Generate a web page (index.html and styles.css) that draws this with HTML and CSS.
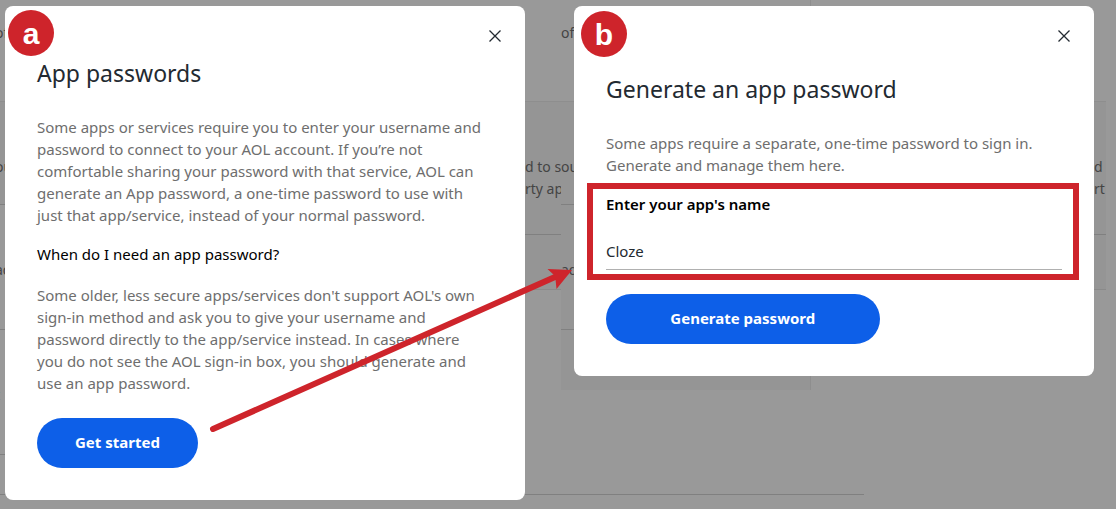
FILE: index.html
```
<!DOCTYPE html>
<html lang="en">

<head>
  <meta charset="UTF-8">
  <meta name="viewport" content="width=device-width, initial-scale=1.0">
  <title>App passwords</title>
  <link rel="stylesheet" href="styles.css">
</head>

<body>
  <main class="stage">
    <!-- dimmed account pages behind the dialogs -->
    <div class="backdrop" aria-hidden="true">
      <div class="pages">
        <div class="page">
          <div class="edge edge-left">
            <div class="row row-head"><span>of</span></div>
            <div class="row row-tall"><span>ou</span></div>
            <div class="row row-add"><span>ad</span></div>
            <div class="row row-last"><span>t</span></div>
          </div>
          <div class="edge edge-right">
            <div class="row row-head"></div>
            <div class="row row-info"><span>d to s</span><span>rty ap</span></div>
            <div class="row row-short"></div>
          </div>
        </div>
        <div class="page page-cut">
          <div class="edge edge-left shaded">
            <div class="row row-head"><span>of</span></div>
            <div class="row row-tall"><span>ou</span></div>
            <div class="row row-add"><span>ad</span></div>
          </div>
          <div class="edge edge-right">
            <div class="row row-head"></div>
            <div class="row row-info"><span>d</span><span>rt</span></div>
            <div class="row row-short"></div>
          </div>
        </div>
      </div>
      <div class="page-end"></div>
    </div>

    <div class="dialogs">
      <section class="dialog" aria-labelledby="title-a">
        <span class="badge">a</span>
        <button class="close" type="button" aria-label="Close">
          <svg viewBox="0 0 12 12" width="12" height="12"><path d="M.5.5l11 11M11.5.5l-11 11" /></svg>
        </button>
        <h1 class="title" id="title-a">App passwords</h1>
        <p class="text">Some apps or services require you to enter your username and<br>
          password to connect to your AOL account. If you’re not<br>
          comfortable sharing your password with that service, AOL can<br>
          generate an App password, a one-time password to use with<br>
          just that app/service, instead of your normal password.</p>
        <h2 class="question">When do I need an app password?</h2>
        <p class="text">Some older, less secure apps/services don't support AOL's own<br>
          sign-in method and ask you to give your username and<br>
          password directly to the app/service instead. In cases where<br>
          you do not see the AOL sign-in box, you should generate and<br>
          use an app password.</p>
        <button class="btn" type="button">Get started</button>
      </section>

      <section class="dialog dialog-b" aria-labelledby="title-b">
        <span class="badge">b</span>
        <button class="close" type="button" aria-label="Close">
          <svg viewBox="0 0 12 12" width="12" height="12"><path d="M.5.5l11 11M11.5.5l-11 11" /></svg>
        </button>
        <h1 class="title" id="title-b">Generate an app password</h1>
        <p class="text">Some apps require a separate, one-time password to sign in.<br>
          Generate and manage them here.</p>
        <form>
          <div class="highlight">
            <label for="app-name">Enter your app's name</label>
            <input id="app-name" type="text" value="Cloze">
          </div>
          <button class="btn btn-wide" type="button">Generate password</button>
        </form>
      </section>
    </div>

    <!-- arrow from step a to step b -->
    <svg class="arrow" viewBox="0 0 366 174" width="366" height="174" aria-hidden="true">
      <path class="shaft" d="M4 167L346 15" />
      <path class="head" d="M363 8L338.500 7L346 14L346.500 17L347.500 27z" />
    </svg>
  </main>
</body>

</html>
```
FILE: styles.css
```
* {
  box-sizing: border-box;
  margin: 0;
  padding: 0;
}

:root {
  --red: #ce242b;
  --blue: #0d5fe8;
  --font: "Noto Sans", "Open Sans", sans-serif;
}

body {
  background-color: #999;
  font-family: var(--font);
  font-size: 15px;
  line-height: 22px;
}

button,
input {
  font: inherit;
  border: none;
  background: none;
}

.stage {
  position: relative;
  display: grid;
  min-height: 100vh;
  overflow: hidden;
}

/* both layers share one cell */
.backdrop,
.dialogs {
  grid-area: 1 / 1;
}

.pages {
  display: grid;
  grid-template-columns: 561fr 555fr;
  align-items: start;
}

.page {
  display: flex;
  justify-content: space-between;
  min-width: 0;
}

.page-cut {
  padding-right: 10px;
}

.edge {
  color: #444;
  font-size: 14px;
  white-space: nowrap;
  overflow: hidden;
}

.edge-left {
  width: 40px;
}

.edge-left span {
  margin-left: -5px;
}

.page-cut .edge-left {
  width: 250px;
  height: 390px;
  border-right: 1px solid #8e8e8e;
}

.page-cut .edge-left span {
  margin-left: 0;
}

.edge-right {
  width: 36px;
}

.page-cut .edge-right {
  width: 12px;
}

.row {
  display: flex;
  flex-direction: column;
  border-bottom: 1px solid #808080;
}

.row-head {
  height: 102px;
  padding-top: 22px;
  border-color: #8e8e8e;
}

.row-tall {
  height: 103px;
  padding-top: 54px;
  background-color: #959595;
}

.row-add,
.row-last {
  height: 125px;
  padding-top: 54px;
}

.row-info {
  height: 133px;
  padding-top: 54px;
  background-color: #959595;
}

.row-short {
  height: 55px;
  background-color: #959595;
  border-color: #8a8a8a;
}

.shaded {
  background: linear-gradient(#999 102px, #959595 102px);
}

.page-end {
  height: 40px;
  margin-right: 252px;
  border-bottom: 1px solid #808080;
}

.dialogs {
  display: grid;
  grid-template-columns: 1fr 1fr;
  align-items: start;
  gap: 49px;
  padding: 6px 22px 9px 5px;
}

.dialog {
  position: relative;
  display: flex;
  flex-direction: column;
  align-items: flex-start;
  padding: 18px 32px 32px;
  background-color: #fff;
  border-radius: 8px;
}

.badge {
  position: absolute;
  top: 4px;
  left: 3px;
  width: 46px;
  height: 46px;
  border-radius: 50%;
  background-color: var(--red);
  color: #fff;
  font: bold 30px/48px "Liberation Sans", Arial, sans-serif;
  text-align: center;
}

.dialog-b .badge {
  top: 5px;
  left: 7px;
}

.close {
  display: flex;
  align-items: center;
  justify-content: center;
  align-self: flex-end;
  width: 24px;
  height: 24px;
  margin-right: -14px;
  cursor: pointer;
}

.close path {
  stroke: #232a31;
  stroke-width: 1.3;
}

.title {
  margin: 9px 0 27px;
  color: #232a31;
  font-size: 23px;
  font-weight: normal;
  line-height: 32px;
}

.dialog-b .title {
  margin-top: 25px;
}

.text {
  color: #6e6e6e;
  white-space: nowrap;
}

.question {
  margin: 17px 0 19px;
  color: #000;
  font-size: 15px;
  font-weight: normal;
}

.btn {
  height: 50px;
  margin-top: 24px;
  padding: 0 38px 2px;
  border-radius: 25px;
  background-color: var(--blue);
  color: #fff;
  font-weight: bold;
  cursor: pointer;
}

.dialog-b form {
  width: 100%;
}

.highlight {
  display: flex;
  flex-direction: column;
  margin: 7px -17px 0 -19px;
  padding: 4px 11px 4px 13px;
  border: 6px solid var(--red);
}

.highlight label {
  color: #000;
  font-weight: 600;
}

.highlight input {
  height: 36px;
  margin-top: 19px;
  padding-bottom: 2px;
  border-bottom: 1px solid #b0b0b0;
  color: #232a31;
  outline: none;
}

.btn-wide {
  width: 60%;
  margin-top: 14px;
}

.arrow {
  position: absolute;
  top: 262px;
  left: 209px;
}

.shaft {
  stroke: var(--red);
  stroke-width: 6;
  stroke-linecap: round;
}

.head {
  fill: var(--red);
}
```
